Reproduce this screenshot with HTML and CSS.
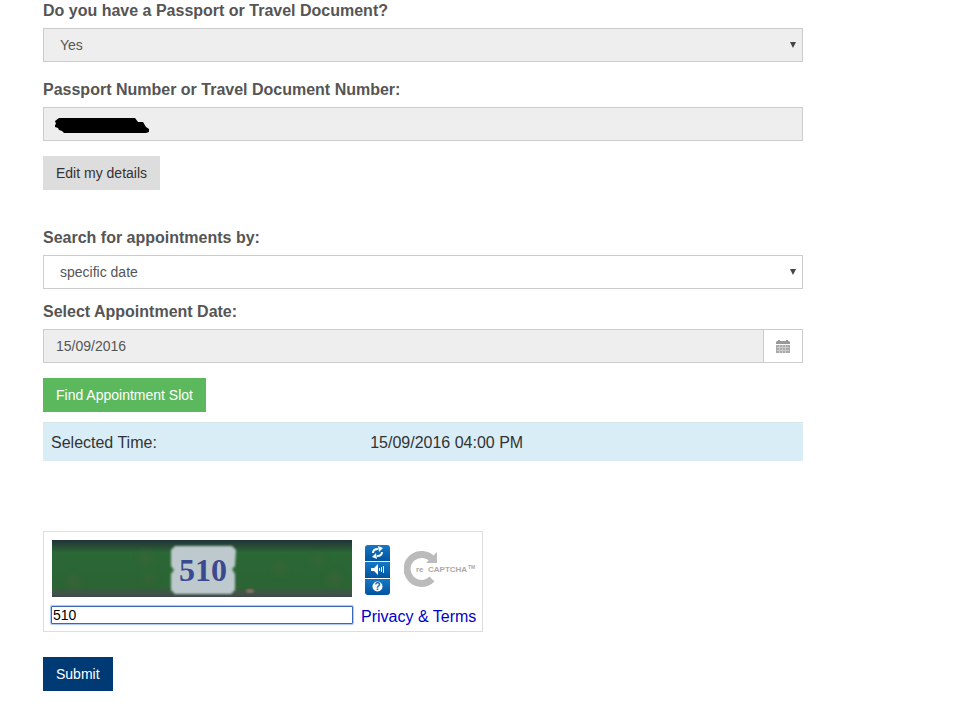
FILE: index.html
```html
<!DOCTYPE html>
<html lang="en">

<head>
    <meta charset="utf-8">
    <meta name="viewport" content="width=device-width, initial-scale=1">
    <title>Appointment</title>
    <link rel="stylesheet" href="styles.css">
</head>

<body>
    <form class="page" action="#" method="post">
        <div class="group">
            <label for="hasPassport">Do you have a Passport or Travel Document?</label>
            <div class="select">
                <select id="hasPassport" class="control" disabled>
                    <option>Yes</option>
                </select>
            </div>
        </div>

        <div class="group">
            <label for="passportNo">Passport Number or Travel Document Number:</label>
            <div class="masked">
                <input type="text" id="passportNo" class="control" disabled>
                <svg class="scribble" width="95" height="17" viewBox="0 0 95 17">
                    <path d="M4 1h76l3 4h5l3 5 3 2v3l-3 1H9l-2-2-3-1-1-2-3-1V8l1-1-1-3z" />
                </svg>
            </div>
        </div>

        <button type="button" class="btn">Edit my details</button>

        <div class="group search">
            <label for="searchBy">Search for appointments by:</label>
            <div class="select">
                <select id="searchBy" class="control">
                    <option>specific date</option>
                </select>
            </div>
        </div>

        <div class="group">
            <label for="apptDate">Select Appointment Date:</label>
            <div class="date">
                <input type="text" id="apptDate" class="control" value="15/09/2016" readonly>
                <button type="button" class="calendar" aria-label="Open calendar">
                    <svg width="14" height="14" viewBox="0 0 14 14">
                        <path fill="#999" d="M1 2h1V1h2v1h6V1h2v1h1l1 1v2H0V3z" />
                        <path fill="#aaa" d="M0 6h14v8H0z" />
                        <path stroke="#ccc" d="M1 8.500h12M1 11.500h12M3.500 6v8M6.500 6v8M9.500 6v8" />
                    </svg>
                </button>
            </div>
        </div>

        <button type="button" class="btn btn-success">Find Appointment Slot</button>

        <table class="selected">
            <tr>
                <th scope="row">Selected Time:</th>
                <td>15/09/2016 04:00 PM</td>
            </tr>
        </table>

        <div class="captcha">
            <svg class="challenge" width="300" height="57" viewBox="0 0 300 57" role="img" aria-label="Challenge image">
                <defs>
                    <linearGradient id="wall" x1="0" y1="0" x2="0" y2="1">
                        <stop offset="0" stop-color="#21343a" />
                        <stop offset=".1" stop-color="#284836" />
                        <stop offset=".22" stop-color="#2a6836" />
                        <stop offset=".82" stop-color="#2c6434" />
                        <stop offset=".94" stop-color="#425349" />
                        <stop offset="1" stop-color="#41474c" />
                    </linearGradient>
                    <filter id="soft" x="-20%" y="-20%" width="140%" height="140%">
                        <feGaussianBlur stdDeviation="1" />
                    </filter>
                    <filter id="haze" x="-50%" y="-50%" width="200%" height="200%">
                        <feGaussianBlur stdDeviation="4" />
                    </filter>
                </defs>
                <rect width="300" height="57" fill="url(#wall)" />
                <g filter="url(#haze)" fill="#58603a" opacity=".5">
                    <circle cx="22" cy="42" r="5" />
                    <circle cx="94" cy="18" r="5" />
                    <circle cx="97" cy="38" r="4" />
                    <circle cx="228" cy="28" r="5" />
                    <circle cx="266" cy="20" r="4" />
                    <circle cx="282" cy="39" r="5" />
                </g>
                <ellipse cx="198" cy="51" rx="4" ry="2" fill="#8a7060" filter="url(#soft)" />
                <path filter="url(#soft)" fill="#bdc9cc" d="M123 6h57l4 4-1 16-3 3 3 5v16l-4 4h-56l-4-4V34l3-4-3-4V10z" />
                <text x="151" y="41" text-anchor="middle" class="plate">510</text>
            </svg>

            <div class="tools">
                <button type="button" aria-label="Get a new challenge">
                    <svg width="13" height="13" viewBox="0 0 13 13" fill="none" stroke="#fff" stroke-width="2">
                        <path d="M2 7c0-3 2-4 5-4M11 6c0 3-2 4-5 4" />
                        <path fill="#fff" stroke="none" d="M7 0l5 2-4 4zM6 13l-5-2 4-4z" />
                    </svg>
                </button>
                <button type="button" aria-label="Get an audio challenge">
                    <svg width="15" height="11" viewBox="0 0 15 11">
                        <path fill="#fff" d="M1 4h3l4-4v11L4 7H1z" />
                        <path fill="none" stroke="#fff" d="M9.500 4v3M11.500 3v5M13.500 2v7" />
                    </svg>
                </button>
                <button type="button" aria-label="Help">
                    <svg width="11" height="11" viewBox="0 0 11 11">
                        <circle cx="5.500" cy="5.500" r="5" fill="#fff" />
                        <text x="5.500" y="9" text-anchor="middle" class="help">?</text>
                    </svg>
                </button>
            </div>

            <svg class="logo" width="72" height="38" viewBox="0 0 72 38" role="img" aria-label="reCAPTCHA">
                <path fill="none" stroke="#bbb" stroke-width="7" d="M29 10A14.500 14.500 0 1 0 28 29" />
                <path fill="#bbb" d="M33 2v11H22z" />
                <text x="12" y="22" class="logo-re">re</text>
                <text x="24" y="22" class="logo-name">CAPTCHA</text>
                <text x="64" y="19" class="logo-tm">TM</text>
            </svg>

            <input type="text" class="answer" value="510" aria-label="Type the text">
            <a href="#" class="terms">Privacy &amp; Terms</a>
        </div>

        <button type="submit" class="btn btn-primary">Submit</button>
    </form>
</body>

</html>
```
FILE: styles.css
```css
* {
    box-sizing: border-box;
}

body {
    margin: 0;
    background-color: #fff;
    color: #333;
    font-family: "Liberation Sans", Arial, sans-serif;
    font-size: 16px;
    line-height: 20px;
}

button,
input,
select {
    font-family: inherit;
}

svg {
    display: block;
}

.page {
    max-width: 803px;
    padding-left: 43px;
}

.group {
    margin-bottom: 15px;
}

.group + .group {
    padding-top: 2px;
}

.group.search {
    margin: 37px 0 10px;
}

label {
    display: block;
    margin-bottom: 6px;
    color: #555;
    font-weight: bold;
    line-height: 22px;
}

.control {
    display: block;
    width: 100%;
    height: 34px;
    padding: 6px 12px;
    border: 1px solid #ccc;
    border-radius: 0;
    background-color: #fff;
    color: #555;
    font-size: 14px;
    line-height: 20px;
    opacity: 1;
}

.control:disabled,
.control[readonly] {
    background-color: #eee;
}

.select,
.masked {
    position: relative;
}

.select .control {
    padding-left: 16px;
    appearance: none;
}

.select::after {
    content: "";
    position: absolute;
    top: 14px;
    right: 7px;
    border: 3px solid transparent;
    border-top: 6px solid #444;
    border-bottom: 0;
}

.scribble {
    position: absolute;
    top: 10px;
    left: 12px;
}

.date {
    display: flex;
}

.calendar {
    display: flex;
    flex: none;
    align-items: center;
    justify-content: center;
    width: 40px;
    margin-left: -1px;
    border: 1px solid #ccc;
    background-color: #fff;
}

.btn {
    display: block;
    height: 34px;
    padding: 6px 13px;
    border: 0;
    background-color: #ddd;
    color: #333;
    font-size: 14px;
    line-height: 20px;
}

.btn-success {
    background-color: #5cb85c;
    color: #fff;
}

.btn-primary {
    background-color: #003a74;
    color: #fff;
}

.selected {
    width: 100%;
    margin: 10px 0 70px;
    border-collapse: separate;
    border-spacing: 0;
    background-color: #d9edf7;
}

.selected th,
.selected td {
    padding: 10px 8px 8px;
    border-top: 1px solid #d3e6ea;
    font-weight: normal;
    text-align: left;
}

.selected th {
    width: 42%;
}

/* captcha */
.captcha {
    display: grid;
    grid-template-columns: 302px 25px 1fr;
    column-gap: 12px;
    row-gap: 9px;
    align-items: center;
    width: 440px;
    max-width: 100%;
    margin-bottom: 25px;
    padding: 8px 6px 3px 7px;
    border: 1px solid #ddd;
}

.challenge {
    margin-left: 1px;
}

.plate {
    fill: #3a4990;
    font-family: "Liberation Serif", serif;
    font-size: 32px;
    font-weight: bold;
}

.tools {
    display: grid;
    gap: 1px;
    overflow: hidden;
    margin-top: 2px;
    border-radius: 3px;
}

.tools button {
    display: flex;
    align-items: center;
    justify-content: center;
    height: 16px;
    padding: 0;
    border: 0;
    background: linear-gradient(#1678c4, #0054a0);
}

.help {
    fill: #0a62ae;
    font-size: 10px;
    font-weight: bold;
}

.logo {
    margin-left: 2px;
}

.logo-re,
.logo-name,
.logo-tm {
    fill: #aaa;
    font-weight: bold;
}

.logo-re,
.logo-name {
    font-size: 8px;
}

.logo-tm {
    font-size: 5px;
}

.answer {
    align-self: start;
    width: 302px;
    height: 18px;
    padding: 0 1px;
    border: 1px solid #3a66b5;
    border-radius: 1px;
    box-shadow: 0 0 1px 1px #a9c6f5;
    color: #000;
    font-size: 14px;
}

.terms {
    grid-column: 2 / 4;
    margin-left: -4px;
    color: #00c;
    line-height: 22px;
    text-decoration: none;
    white-space: nowrap;
}
```
